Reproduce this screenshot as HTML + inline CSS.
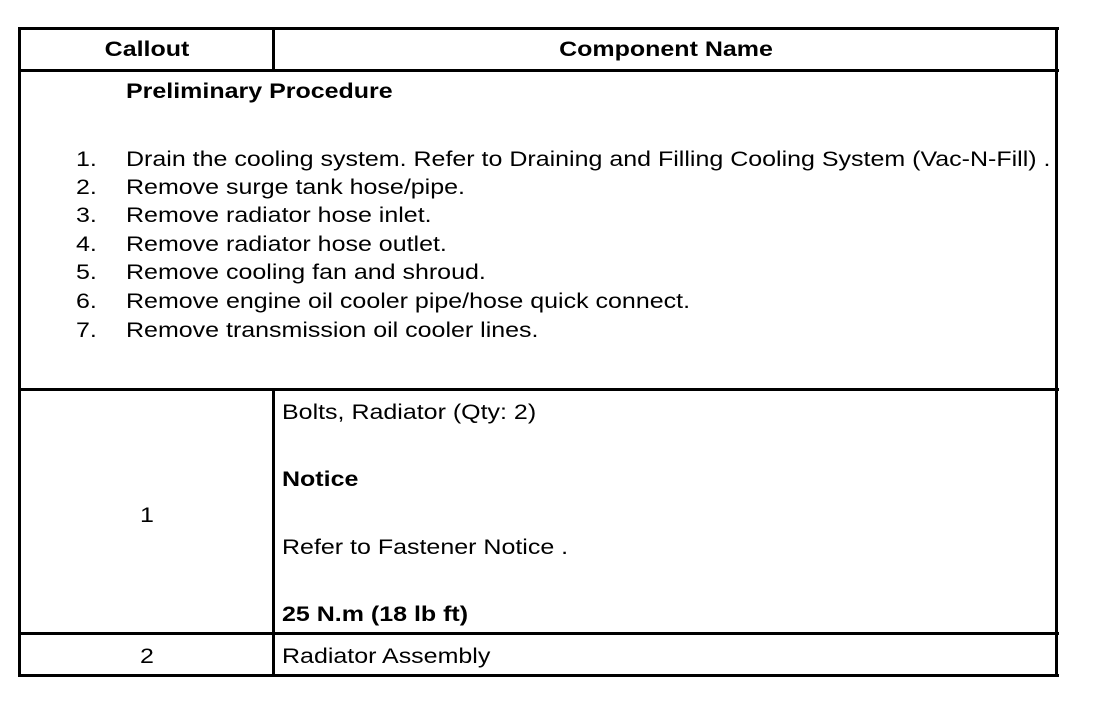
<!DOCTYPE html>
<html><head><meta charset="utf-8"><style>
body{margin:0;width:1120px;height:702px;background:#fff;position:relative;overflow:hidden;font-family:"Liberation Sans",Arial,sans-serif;font-size:21px;color:#000}
.l{position:absolute;background:#000}
.t{position:absolute;white-space:nowrap;line-height:24px;transform-origin:0 0;transform:scaleX(1.19)}
.b{font-weight:bold}
.c{transform:scaleX(1.19) translateX(-50%)}
</style></head><body>
<div class="l" style="left:18px;top:27px;width:1041px;height:3px"></div>
<div class="l" style="left:18px;top:69px;width:1041px;height:3px"></div>
<div class="l" style="left:18px;top:388px;width:1041px;height:3px"></div>
<div class="l" style="left:18px;top:632px;width:1041px;height:3px"></div>
<div class="l" style="left:18px;top:674px;width:1041px;height:3px"></div>
<div class="l" style="left:18px;top:27px;width:3px;height:650px"></div>
<div class="l" style="left:1055px;top:27px;width:3px;height:650px"></div>
<div class="l" style="left:272px;top:27px;width:3px;height:45px"></div>
<div class="l" style="left:272px;top:388px;width:3px;height:289px"></div>

<div class="t b c" style="left:147px;top:38px">Callout</div>
<div class="t b c" style="left:666px;top:38px">Component Name</div>
<div class="t b" style="left:126px;top:80px">Preliminary Procedure</div>

<div class="t" style="left:76px;top:148px">1.</div><div class="t" style="left:126px;top:148px">Drain the cooling system. Refer to Draining and Filling Cooling System (Vac-N-Fill) .</div>
<div class="t" style="left:76px;top:176px">2.</div><div class="t" style="left:126px;top:176px">Remove surge tank hose/pipe.</div>
<div class="t" style="left:76px;top:204px">3.</div><div class="t" style="left:126px;top:204px">Remove radiator hose inlet.</div>
<div class="t" style="left:76px;top:233px">4.</div><div class="t" style="left:126px;top:233px">Remove radiator hose outlet.</div>
<div class="t" style="left:76px;top:261px">5.</div><div class="t" style="left:126px;top:261px">Remove cooling fan and shroud.</div>
<div class="t" style="left:76px;top:290px">6.</div><div class="t" style="left:126px;top:290px">Remove engine oil cooler pipe/hose quick connect.</div>
<div class="t" style="left:76px;top:319px">7.</div><div class="t" style="left:126px;top:319px">Remove transmission oil cooler lines.</div>

<div class="t c" style="left:147px;top:504px">1</div>
<div class="t" style="left:282px;top:401px">Bolts, Radiator (Qty: 2)</div>
<div class="t b" style="left:282px;top:468px">Notice</div>
<div class="t" style="left:282px;top:536px">Refer to Fastener Notice .</div>
<div class="t b" style="left:282px;top:603px">25 N.m (18 lb ft)</div>

<div class="t c" style="left:147px;top:645px">2</div>
<div class="t" style="left:282px;top:645px">Radiator Assembly</div>
</body></html>
